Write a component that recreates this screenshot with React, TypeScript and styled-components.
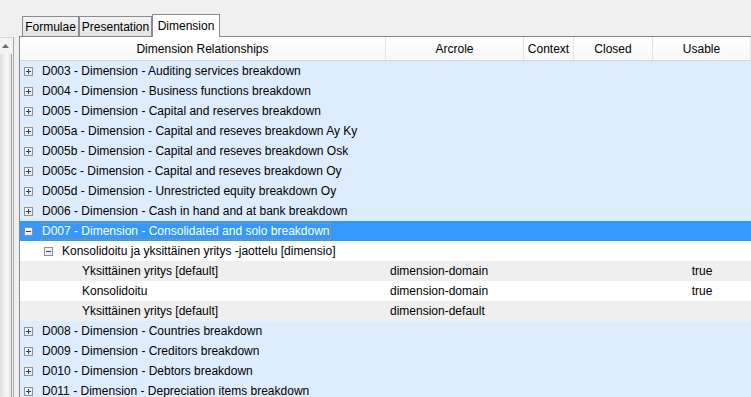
import React from 'react';
import styled, {createGlobalStyle, css} from 'styled-components';

type Tone = 'blue' | 'white' | 'gray' | 'selected';
type Kind = 'collapsed' | 'expanded' | 'leaf';

interface TreeRow {
    level: number;
    kind: Kind;
    text: string;
    tone: Tone;
    arcrole?: string;
    usable?: string;
    focused?: boolean;
}

const dim = (text: string): TreeRow => ({level: 0, kind: 'collapsed', text, tone: 'blue'});

const rows: TreeRow[] = [
    dim('D003 - Dimension - Auditing services breakdown'),
    dim('D004 - Dimension - Business functions breakdown'),
    dim('D005 - Dimension - Capital and reserves breakdown'),
    dim('D005a - Dimension - Capital and reseves breakdown Ay Ky'),
    dim('D005b - Dimension - Capital and reseves breakdown Osk'),
    dim('D005c - Dimension - Capital and reseves breakdown Oy'),
    dim('D005d - Dimension - Unrestricted equity breakdown Oy'),
    dim('D006 - Dimension - Cash in hand and at bank breakdown'),
    {level: 0, kind: 'expanded', text: 'D007 - Dimension - Consolidated and solo breakdown', tone: 'selected', focused: true},
    {level: 1, kind: 'expanded', text: 'Konsolidoitu ja yksittäinen yritys -jaottelu [dimensio]', tone: 'white'},
    {level: 2, kind: 'leaf', text: 'Yksittäinen yritys [default]', tone: 'gray', arcrole: 'dimension-domain', usable: 'true'},
    {level: 2, kind: 'leaf', text: 'Konsolidoitu', tone: 'white', arcrole: 'dimension-domain', usable: 'true'},
    {level: 2, kind: 'leaf', text: 'Yksittäinen yritys [default]', tone: 'gray', arcrole: 'dimension-default'},
    dim('D008 - Dimension - Countries breakdown'),
    dim('D009 - Dimension - Creditors breakdown'),
    dim('D010 - Dimension - Debtors breakdown'),
    dim('D011 - Dimension - Depreciation items breakdown'),
];

const tabs = [
    {label: 'Formulae', width: 57},
    {label: 'Presentation', width: 73},
    {label: 'Dimension', width: 68, active: true},
];

const columns = ['Dimension Relationships', 'Arcrole', 'Context', 'Closed', 'Usable'];

const toneBg: Record<Tone, string> = {
    blue: '#deedfd',
    white: '#ffffff',
    gray: '#efefef',
    selected: '#3399ff',
};

function Expander({open}: { open: boolean }) {
    return (
        <S.ExpanderBox>
            <svg width="9" height="9" viewBox="0 0 9 9">
                <defs>
                    <linearGradient id="exg" x1="0" y1="0" x2="1" y2="1">
                        <stop offset="0" stopColor="#ffffff"/>
                        <stop offset="1" stopColor="#e2e2e2"/>
                    </linearGradient>
                </defs>
                <rect x="0.5" y="0.5" width="8" height="8" fill="url(#exg)" stroke="#919191"/>
                <path d="M2 4.5H7" stroke="#22418a" strokeWidth="1"/>
                {!open && <path d="M4.5 2V7" stroke="#22418a" strokeWidth="1"/>}
            </svg>
        </S.ExpanderBox>
    );
}

export default function App() {
    return (
        <>
            <GlobalStyle/>
            <S.Page>
                <S.SideScroll>
                    <S.ArrowButton>
                        <svg width="7" height="4" viewBox="0 0 7 4">
                            <path d="M0 4L3.5 0L7 4Z" fill="#6d6d6d"/>
                        </svg>
                    </S.ArrowButton>
                    <S.Thumb/>
                </S.SideScroll>
                <S.Main>
                    <S.TabStrip>
                        {tabs.map(tab =>
                            <S.Tab key={tab.label} $w={tab.width} $active={!!tab.active}>{tab.label}</S.Tab>)}
                    </S.TabStrip>
                    <S.Panel>
                        <S.Header>
                            {columns.map(col => <S.HeaderCell key={col}>{col}</S.HeaderCell>)}
                        </S.Header>
                        {rows.map((row, i) =>
                            <S.Row key={i} $tone={row.tone}>
                                <S.TreeCell $level={row.level}>
                                    {row.kind === 'leaf'
                                        ? <S.LeafSpacer/>
                                        : <Expander open={row.kind === 'expanded'}/>}
                                    <S.Label $focused={!!row.focused}>{row.text}</S.Label>
                                </S.TreeCell>
                                <S.Cell>{row.arcrole}</S.Cell>
                                <S.Cell/>
                                <S.Cell/>
                                <S.Cell $center>{row.usable}</S.Cell>
                            </S.Row>)}
                    </S.Panel>
                </S.Main>
            </S.Page>
        </>
    );
}

const GlobalStyle = createGlobalStyle`
  html, body {
    margin: 0;
    padding: 0;
    background: #f0f0f0;
  }

  body {
    font-family: "Liberation Sans", Arial, sans-serif;
    font-size: 12px;
    color: #000;
  }
`

const grid = css`
  display: grid;
  grid-template-columns: 366px 138px 50px 79px 1fr;
  flex: none;
`

const S = {
    Page: styled.div`
      display: flex;
      width: 751px;
      height: 397px;
      overflow: hidden;
      background: #f0f0f0;
    `,
    SideScroll: styled.div`
      width: 13px;
      margin-top: 37px;
      margin-right: 5px;
      border-top: 1px solid #d6d6d6;
      border-right: 1px solid #a6a6a6;
      background: #f4f4f4;
      display: flex;
      flex-direction: column;
    `,
    ArrowButton: styled.div`
      height: 16px;
      display: flex;
      align-items: center;
      justify-content: center;
      padding-right: 2px;
    `,
    Thumb: styled.div`
      flex: 1;
      margin-right: 1px;
      border-right: 1px solid #9a9a9a;
      background: linear-gradient(to right, #dedede, #f7f7f7 60%, #e4e4e4);
    `,
    Main: styled.div`
      flex: 1;
      display: flex;
      flex-direction: column;
      min-width: 0;
      min-height: 0;
    `,
    TabStrip: styled.div`
      flex: none;
      height: 36px;
      display: flex;
      align-items: flex-end;
      padding-left: 3px;
    `,
    Tab: styled.div<{ $w: number; $active: boolean }>`
      width: ${p => p.$w}px;
      box-sizing: border-box;
      height: 20px;
      display: flex;
      align-items: center;
      justify-content: center;
      border: 1px solid #898c95;
      border-bottom: none;
      background: linear-gradient(#f3f3f3, #e4e4e4);
      white-space: nowrap;
      color: #000;

      ${p => p.$active && css`
        height: 23px;
        margin-bottom: -1px;
        padding-bottom: 1px;
        background: #ffffff;
        position: relative;
        z-index: 1;
      `}
    `,
    Panel: styled.div`
      flex: 1;
      min-height: 0;
      overflow: hidden;
      display: flex;
      flex-direction: column;
      border-top: 1px solid #828790;
      border-left: 1px solid #828790;
      background: #ffffff;
    `,
    Header: styled.div`
      ${grid};
      height: 23px;
      border-bottom: 1px solid #d5d5d5;
      background: linear-gradient(#ffffff, #f7f8f9);
    `,
    HeaderCell: styled.div`
      display: flex;
      align-items: center;
      justify-content: center;
      border-right: 1px solid #e3e3e3;
      white-space: nowrap;
    `,
    Row: styled.div<{ $tone: Tone }>`
      ${grid};
      height: 20px;
      line-height: 20px;
      background: ${p => toneBg[p.$tone]};
      color: ${p => p.$tone === 'selected' ? '#ffffff' : '#000000'};
    `,
    TreeCell: styled.div<{ $level: number }>`
      display: flex;
      align-items: center;
      padding-left: ${p => 4 + p.$level * 20}px;
      white-space: nowrap;
      overflow: hidden;
    `,
    ExpanderBox: styled.span`
      display: flex;
      flex: none;
      width: 9px;
      height: 9px;
      margin-right: 8px;
    `,
    LeafSpacer: styled.span`
      width: 17px;
      flex: none;
    `,
    Label: styled.span<{ $focused: boolean }>`
      display: inline-block;
      line-height: 15px;
      border: 1px dotted ${p => p.$focused ? '#d58a3c' : 'transparent'};
    `,
    Cell: styled.div<{ $center?: boolean }>`
      padding-left: ${p => p.$center ? 0 : 4}px;
      text-align: ${p => p.$center ? 'center' : 'left'};
      white-space: nowrap;
      overflow: hidden;
    `,
}
